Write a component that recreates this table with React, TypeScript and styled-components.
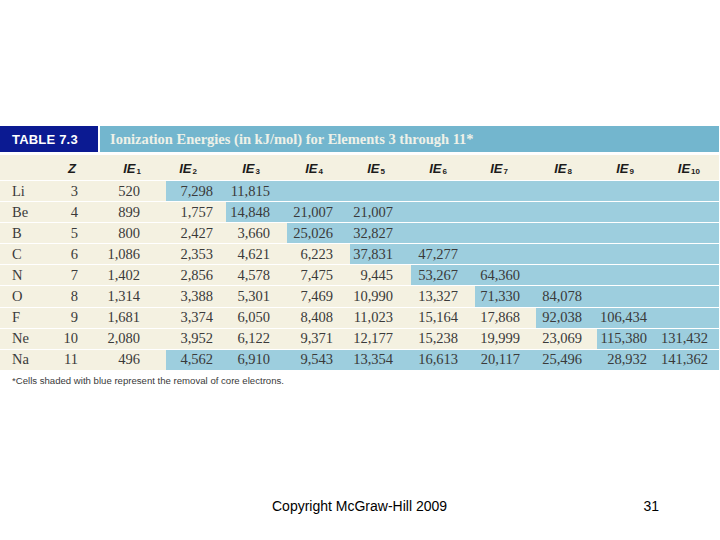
import React from "react";
import styled, { createGlobalStyle } from "styled-components";

const Global = createGlobalStyle`
  html, body { margin: 0; padding: 0; background: #ffffff; }
  #root { width: 720px; height: 540px; }
`;

const Page = styled.div`
  width: 720px;
  height: 540px;
  box-sizing: border-box;
  padding-top: 126px;
  display: flex;
  flex-direction: column;
  background: #ffffff;
`;

const Band = styled.div`
  width: 719px;
  height: 26px;
  display: flex;
  gap: 2px;
  margin-bottom: 3px;
`;

const BandLabel = styled.div`
  width: 98px;
  background: #0b1a92;
  color: #ffffff;
  font-family: "Liberation Sans", Arial, sans-serif;
  font-weight: 700;
  font-size: 13px;
  letter-spacing: 0.2px;
  display: flex;
  align-items: center;
  padding-left: 12px;
  box-sizing: border-box;
`;

const BandTitle = styled.div`
  flex: 1;
  background: #73b6ce;
  color: #eef1e8;
  font-family: "Liberation Serif", "Times New Roman", serif;
  font-weight: 700;
  font-size: 14.5px;
  display: flex;
  align-items: center;
  padding-left: 10px;
`;

const Grid = styled.div`
  width: 719px;
  display: grid;
  grid-template-columns: 50px 38px 78px 60px 61px 63px 61px 64px 61px 61px 61px 61px;
  grid-auto-rows: 20.1px;
  grid-template-rows: 25px;
  row-gap: 1px;
  background: #ffffff;
`;

const Cell = styled.div<{ $blue?: boolean; $pad: number; $left?: boolean }>`
  background: ${(p) => (p.$blue ? "#9dcede" : "#f4f1e1")};
  color: #3a3a3a;
  font-family: "Liberation Serif", "Times New Roman", serif;
  font-size: 14.5px;
  display: flex;
  align-items: center;
  justify-content: ${(p) => (p.$left ? "flex-start" : "flex-end")};
  padding: ${(p) => (p.$left ? `0 0 0 ${p.$pad}px` : `0 ${p.$pad}px 0 0`)};
  white-space: nowrap;
  box-sizing: border-box;
`;

const HeadCell = styled(Cell)`
  color: #1c1c1c;
  font-family: "Liberation Sans", Arial, sans-serif;
  font-weight: 700;
  font-style: italic;
  font-size: 13px;
  padding-top: 2px;
`;

const Sub = styled.span`
  font-size: 8px;
  font-style: normal;
  position: relative;
  top: 3px;
  margin-left: 1px;
`;

const Note = styled.div`
  margin-top: 5px;
  padding-left: 12px;
  font-family: "Liberation Sans", Arial, sans-serif;
  font-size: 9.6px;
  color: #3a3a3a;
`;

const Footer = styled.div`
  margin-top: auto;
  padding: 0 61px 26px 272px;
  display: flex;
  justify-content: space-between;
  font-family: "Liberation Sans", Arial, sans-serif;
  font-size: 14px;
  color: #000000;
`;

const valuePads = [10, 26, 13, 17, 17, 18, 17, 16, 15, 11, 11];
const headPads = [12, 25, 29, 27, 27, 26, 28, 28, 25, 24, 19];

type Row = { sym: string; z: number; ie: string[]; blueFrom: number };

const rows: Row[] = [
  { sym: "Li", z: 3, ie: ["520", "7,298", "11,815"], blueFrom: 1 },
  { sym: "Be", z: 4, ie: ["899", "1,757", "14,848", "21,007", "21,007"], blueFrom: 2 },
  { sym: "B", z: 5, ie: ["800", "2,427", "3,660", "25,026", "32,827"], blueFrom: 3 },
  { sym: "C", z: 6, ie: ["1,086", "2,353", "4,621", "6,223", "37,831", "47,277"], blueFrom: 4 },
  { sym: "N", z: 7, ie: ["1,402", "2,856", "4,578", "7,475", "9,445", "53,267", "64,360"], blueFrom: 5 },
  { sym: "O", z: 8, ie: ["1,314", "3,388", "5,301", "7,469", "10,990", "13,327", "71,330", "84,078"], blueFrom: 6 },
  { sym: "F", z: 9, ie: ["1,681", "3,374", "6,050", "8,408", "11,023", "15,164", "17,868", "92,038", "106,434"], blueFrom: 7 },
  { sym: "Ne", z: 10, ie: ["2,080", "3,952", "6,122", "9,371", "12,177", "15,238", "19,999", "23,069", "115,380", "131,432"], blueFrom: 8 },
  { sym: "Na", z: 11, ie: ["496", "4,562", "6,910", "9,543", "13,354", "16,613", "20,117", "25,496", "28,932", "141,362"], blueFrom: 1 },
];

export default function App() {
  return (
    <>
      <Global />
      <Page>
        <Band>
          <BandLabel>TABLE 7.3</BandLabel>
          <BandTitle>Ionization Energies (in kJ/mol) for Elements 3 through 11*</BandTitle>
        </Band>
        <Grid>
          <HeadCell $pad={12} $left></HeadCell>
          <HeadCell $pad={headPads[0]}>Z</HeadCell>
          {Array.from({ length: 10 }, (_, i) => (
            <HeadCell key={`h${i}`} $pad={headPads[i + 1]}>
              IE<Sub>{i + 1}</Sub>
            </HeadCell>
          ))}
          {rows.map((r) => (
            <React.Fragment key={r.sym}>
              <Cell $left $pad={12}>{r.sym}</Cell>
              <Cell $pad={valuePads[0]}>{r.z}</Cell>
              {Array.from({ length: 10 }, (_, i) => (
                <Cell key={`${r.sym}${i}`} $pad={valuePads[i + 1]} $blue={i >= r.blueFrom}>
                  {r.ie[i] ?? ""}
                </Cell>
              ))}
            </React.Fragment>
          ))}
        </Grid>
        <Note>*Cells shaded with blue represent the removal of core electrons.</Note>
        <Footer>
          <span>Copyright McGraw-Hill 2009</span>
          <span>31</span>
        </Footer>
      </Page>
    </>
  );
}
